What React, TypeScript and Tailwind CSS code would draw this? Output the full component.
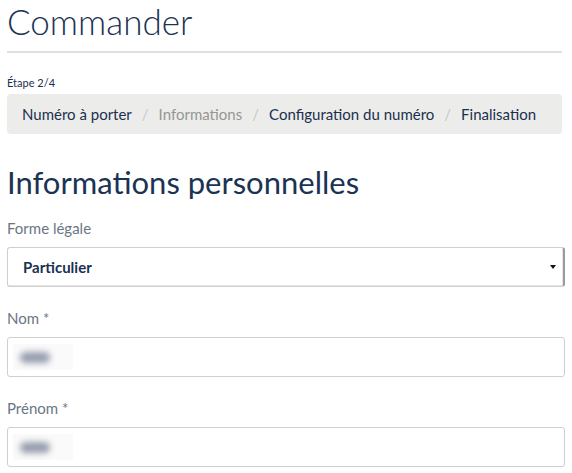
import React from 'react';

const font = { fontFamily: 'Lato, "Liberation Sans", sans-serif' };

const Blurred: React.FC = () => (
  <div className="w-[60px] h-[26px] bg-[#fafafa] flex items-center pl-[7px]">
    <span className="block w-[30px] h-[11px] rounded-full bg-[#959cad] blur-[3px]"></span>
  </div>
);

const Field: React.FC<{ label: string }> = ({ label }) => (
  <div className="flex flex-col">
    <label className="text-[15px] text-[#6b7685] leading-[20px] mb-[9px]">{label}</label>
    <div className="h-[40px] border border-[#cfcfcf] rounded-[3px] bg-white flex items-center pl-[5px]">
      <Blurred />
    </div>
  </div>
);

const App: React.FC = () => {
  return (
    <div className="w-[572px] h-[473px] bg-white px-[7px] overflow-hidden text-[#1b3050]" style={font}>
      {/* Page title */}
      <h1 className="text-[35px] font-light leading-[42px] text-[#1b3353]">Commander</h1>
      <div className="mt-[9px] h-[2px] bg-[#e0e0e0] mr-[3px]"></div>

      {/* Step */}
      <div className="mt-[23px] text-[11px] leading-[14px] text-[#1b3050]">Étape 2/4</div>
      <nav className="mt-[4px] h-[40px] bg-[#ecedea] rounded-[4px] flex items-center px-[15px] text-[15px] mr-[3px]">
        <span>Numéro à porter</span>
        <span className="text-[#c8c8c8] px-[10px]">/</span>
        <span className="text-[#959595]">Informations</span>
        <span className="text-[#c8c8c8] px-[10px]">/</span>
        <span>Configuration du numéro</span>
        <span className="text-[#c8c8c8] px-[10px]">/</span>
        <span>Finalisation</span>
      </nav>

      {/* Section */}
      <h2 className="mt-[30px] text-[31px] leading-[36px] text-[#1b3353]">Informations personnelles</h2>

      <div className="mt-[18px] flex flex-col">
        <label className="text-[15px] text-[#6b7685] leading-[20px] mb-[9px]">Forme légale</label>
        <div className="h-[40px] border border-[#cfcfcf] border-r-[#9a9a9a] border-r-2 rounded-[3px] bg-white flex items-center pl-[15px] pr-[7px] shadow-[inset_-1px_-1px_0_#e5e5e5]">
          <span className="text-[15px] font-bold text-[#1b3050] flex-1">Particulier</span>
          <svg width="6" height="4" viewBox="0 0 6 4"><path d="M0 0h6L3 4z" fill="#111" /></svg>
        </div>
      </div>

      <div className="mt-[21px]">
        <Field label="Nom *" />
      </div>
      <div className="mt-[21px]">
        <Field label="Prénom *" />
      </div>
    </div>
  );
};

export default App;
